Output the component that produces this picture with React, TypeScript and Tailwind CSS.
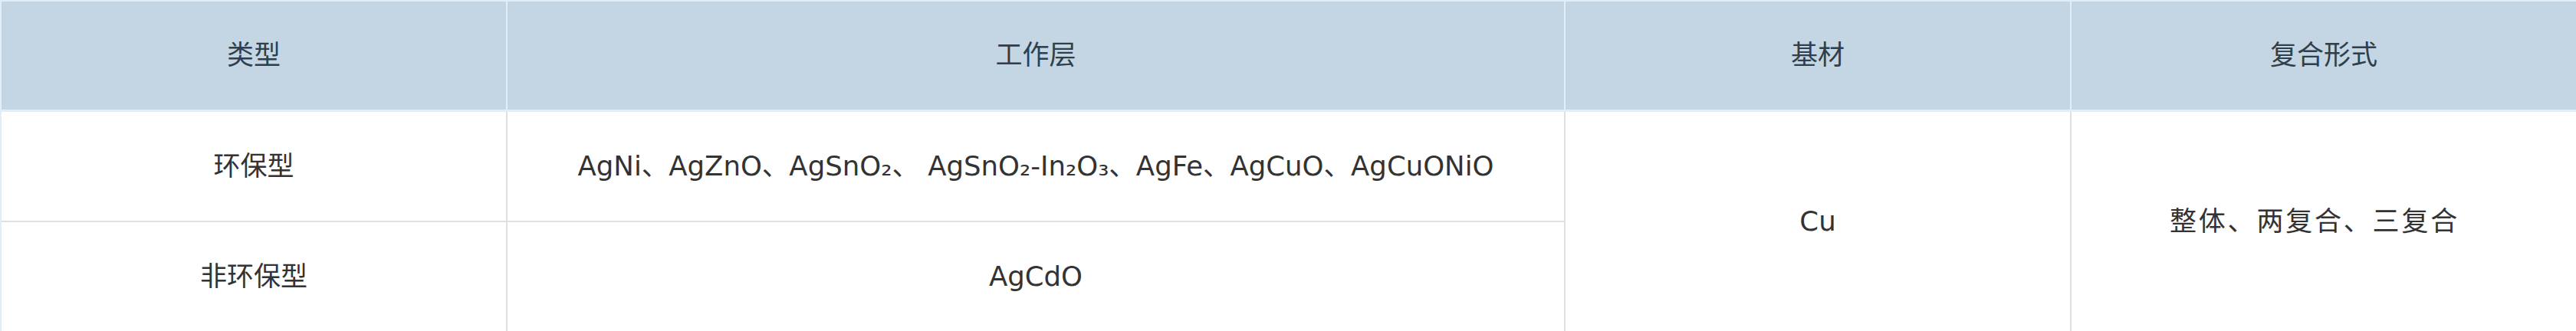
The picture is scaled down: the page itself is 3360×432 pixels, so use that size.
import React from "react";

const font = { fontFamily: '"DejaVu Sans", "Noto Sans CJK SC", sans-serif' };

export default function App() {
  const head = "flex items-center justify-center bg-[#c4d6e3] text-[#2f3f4d] text-[35px] border-r-2 border-b-[3px] border-[#e3edf5]";
  const cell = "flex items-center justify-center bg-white text-[#333333] text-[35px] border-r-2 border-b-2 border-[#e0e0e0]";
  return (
    <div style={font} className="w-[3360px] h-[432px] bg-white">
      <div className="grid grid-cols-[660px_1380px_660px_660px] grid-rows-[144px_144px_144px] border-t-2 border-l-2 border-[#e3edf5]">
        <div className={head}>类型</div>
        <div className={head}>工作层</div>
        <div className={head}>基材</div>
        <div className={head}>复合形式</div>
        <div className={cell}>环保型</div>
        <div className={cell}>
          <span className="text-[35.5px]">AgNi、AgZnO、AgSnO₂、 AgSnO₂-In₂O₃、AgFe、AgCuO、AgCuONiO</span>
        </div>
        <div className={`${cell} row-span-2`}>
          <span className="text-[35.5px]">Cu</span>
        </div>
        <div className={`${cell} row-span-2 pr-[24px]`}>
          <span className="tracking-[2.8px]">整体、两复合、三复合</span>
        </div>
        <div className={cell}>非环保型</div>
        <div className={cell}>
          <span className="text-[35.5px]">AgCdO</span>
        </div>
      </div>
    </div>
  );
}
